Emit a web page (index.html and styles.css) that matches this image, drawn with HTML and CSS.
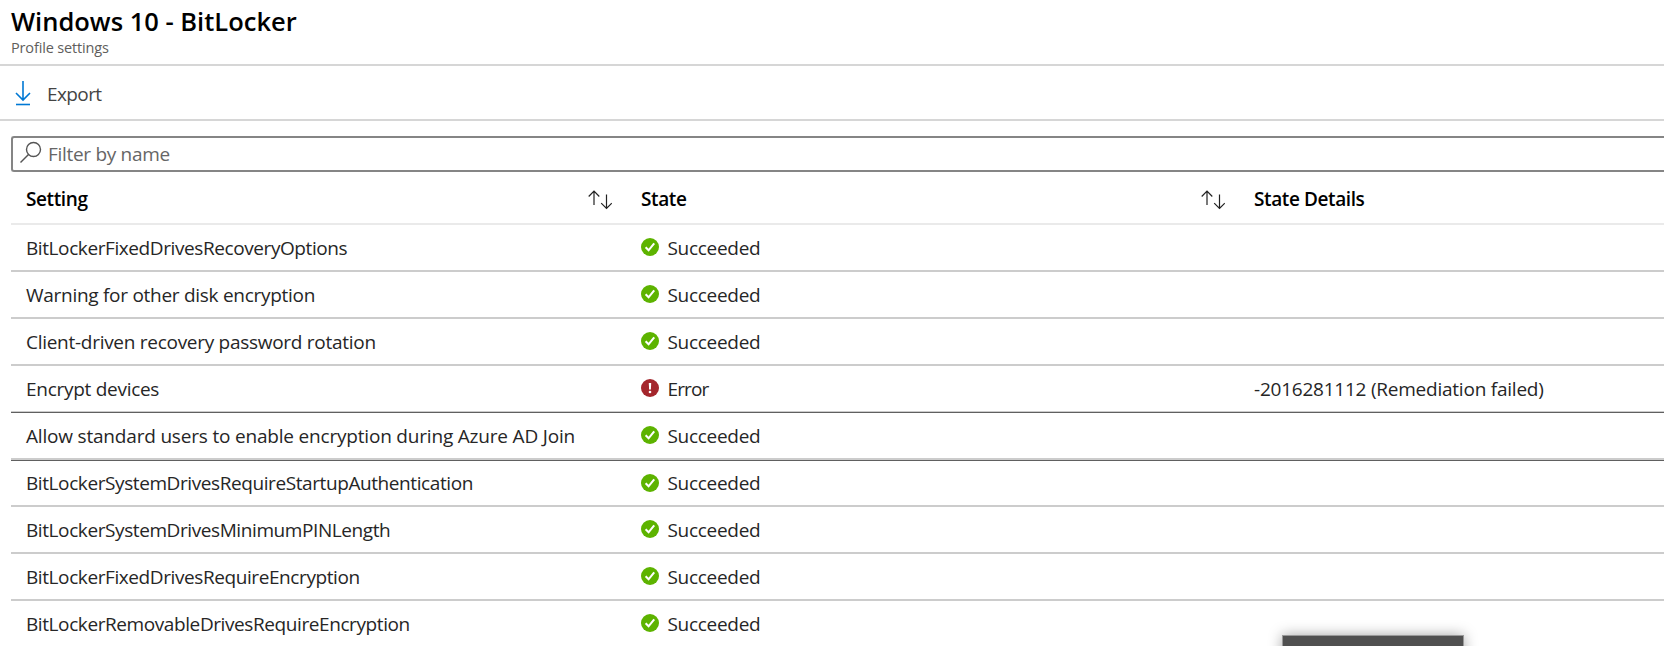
FILE: index.html
```html
<!DOCTYPE html>
<html lang="en">
<head>
  <meta charset="utf-8">
  <title>Windows 10 - BitLocker</title>
  <link rel="stylesheet" href="styles.css">
</head>
<body>
  <svg class="symbols" aria-hidden="true">
    <symbol id="ok" viewBox="0 0 18 18">
      <circle cx="9" cy="9" r="9" fill="#5db300"/>
      <path d="M4.600 9.300l3 3 5.600-6.900" fill="none" stroke="#fff" stroke-width="2.100"/>
    </symbol>
    <symbol id="error" viewBox="0 0 18 18">
      <circle cx="9" cy="9" r="9" fill="#a4262c"/>
      <path d="M7.800 4h2.400l-.3 6.600H8.100z" fill="#fff"/>
      <circle cx="9" cy="13" r="1.300" fill="#fff"/>
    </symbol>
    <symbol id="sort" viewBox="0 0 24 20">
      <path d="M6 15V1.500M.7 6.500L6 1.200l5.300 5.300M18.500 4.500v14M13.200 13.200l5.300 5.300 5.300-5.300" fill="none" stroke="#222" stroke-width="1.200"/>
    </symbol>
  </svg>

  <header class="header">
    <h1>Windows 10 - BitLocker</h1>
    <p>Profile settings</p>
  </header>

  <div class="toolbar">
    <button class="export">
      <svg width="16" height="25" viewBox="0 0 16 25" fill="none" stroke="#0078d4" stroke-width="1.600">
        <path d="M8 0v18.500M1 12l7 7 7-7"/>
        <path d="M1 23.500h14"/>
      </svg>
      <span>Export</span>
    </button>
  </div>

  <main class="content">
    <label class="filter">
      <svg width="22" height="22" viewBox="0 0 22 22" fill="none" stroke="#555" stroke-width="1.400">
        <circle cx="13.500" cy="8.500" r="7"/>
        <path d="M8.500 13.500l-8 8"/>
      </svg>
      <input type="text" placeholder="Filter by name">
    </label>

    <div class="grid">
      <div class="row head">
        <div>Setting <svg class="sort"><use href="#sort"/></svg></div>
        <div>State <svg class="sort"><use href="#sort"/></svg></div>
        <div>State Details</div>
      </div>
      <div class="row">
        <div class="name">BitLockerFixedDrivesRecoveryOptions</div>
        <div class="state"><svg class="icon"><use href="#ok"/></svg>Succeeded</div>
        <div></div>
      </div>
      <div class="row">
        <div class="phrase">Warning for other disk encryption</div>
        <div class="state"><svg class="icon"><use href="#ok"/></svg>Succeeded</div>
        <div></div>
      </div>
      <div class="row">
        <div class="phrase">Client-driven recovery password rotation</div>
        <div class="state"><svg class="icon"><use href="#ok"/></svg>Succeeded</div>
        <div></div>
      </div>
      <div class="row before-active">
        <div class="phrase">Encrypt devices</div>
        <div class="state failed"><svg class="icon"><use href="#error"/></svg>Error</div>
        <div class="details">-2016281112 (Remediation failed)</div>
      </div>
      <div class="row active">
        <div class="phrase long">Allow standard users to enable encryption during Azure AD Join</div>
        <div class="state"><svg class="icon"><use href="#ok"/></svg>Succeeded</div>
        <div></div>
      </div>
      <div class="row after-active">
        <div class="name">BitLockerSystemDrivesRequireStartupAuthentication</div>
        <div class="state"><svg class="icon"><use href="#ok"/></svg>Succeeded</div>
        <div></div>
      </div>
      <div class="row">
        <div class="name">BitLockerSystemDrivesMinimumPINLength</div>
        <div class="state"><svg class="icon"><use href="#ok"/></svg>Succeeded</div>
        <div></div>
      </div>
      <div class="row">
        <div class="name">BitLockerFixedDrivesRequireEncryption</div>
        <div class="state"><svg class="icon"><use href="#ok"/></svg>Succeeded</div>
        <div></div>
      </div>
      <div class="row">
        <div class="name">BitLockerRemovableDrivesRequireEncryption</div>
        <div class="state"><svg class="icon"><use href="#ok"/></svg>Succeeded</div>
        <div></div>
      </div>
    </div>
  </main>

  <div class="tooltip"></div>
</body>
</html>
```
FILE: styles.css
```css
* {
  box-sizing: border-box;
}
body {
  margin: 0;
  height: 646px;
  overflow: hidden;
  background: #fff;
  color: #262626;
  font-family: "Open Sans", "Noto Sans", sans-serif;
  font-size: 19px;
}
.symbols {
  position: absolute;
  width: 0;
  height: 0;
}
.header {
  height: 66px;
  padding: 4px 0 0 11px;
  border-bottom: 2px solid #d6d6d6;
}
.header h1 {
  margin: 0;
  color: #000;
  font-size: 25.5px;
  font-weight: 540;
  line-height: 34px;
}
.header p {
  margin: 0;
  color: #605e5c;
  font-size: 14.5px;
  letter-spacing: -0.15px;
  line-height: 19px;
}
.toolbar {
  display: flex;
  height: 55px;
  padding-left: 15px;
  border-bottom: 2px solid #d6d6d6;
}
.export {
  display: flex;
  align-items: center;
  gap: 16px;
  padding: 2px 0 0;
  border: 0;
  background: none;
  color: #444;
  font: inherit;
  letter-spacing: -0.6px;
}
.content {
  padding: 15px 0 0 11px;
}
.filter {
  display: flex;
  height: 36px;
  padding: 3px 0 0 7px;
  gap: 6px;
  border: 2px solid #858585;
  border-right: 0;
  border-radius: 3px 0 0 3px;
}
.filter input {
  flex: 1;
  height: 28px;
  margin-top: -1px;
  padding: 0;
  border: 0;
  outline: 0;
  background: none;
  font: inherit;
  letter-spacing: -0.3px;
}
.filter input::placeholder {
  color: #666;
}
.row {
  display: grid;
  grid-template-columns: 615px 613px 1fr;
  height: 47px;
  border-bottom: 2px solid #ccc;
}
.row > div {
  display: flex;
  align-items: center;
  padding-left: 15px;
  white-space: nowrap;
}
.row > .name {
  letter-spacing: -0.41px;
}
.row > .phrase {
  letter-spacing: -0.28px;
}
.row > .long {
  letter-spacing: -0.19px;
}
.row > .details {
  letter-spacing: -0.23px;
}
.row > .state {
  letter-spacing: -0.3px;
}
.row > .failed {
  letter-spacing: -0.9px;
}
.head {
  height: 53px;
  padding-top: 2px;
  border-bottom-color: #eaeaea;
  color: #000;
  font-weight: 560;
  letter-spacing: -0.4px;
}
.sort {
  width: 24px;
  height: 20px;
  margin: 2px 14px 0 auto;
}
.icon {
  width: 18px;
  height: 18px;
  margin: 0 8.5px 1px 0;
}
/* the focused row gets a dark outline inside the grid lines */
.before-active {
  height: 46px;
  border-bottom-width: 1px;
}
.active {
  height: 48px;
  border-top: 1px solid #606060;
}
.after-active {
  border-top: 1px solid #606060;
}
.tooltip {
  position: absolute;
  left: 1282px;
  top: 635px;
  width: 182px;
  height: 40px;
  border: 1px solid #999;
  background: #505050;
  box-shadow: 0 0 14px rgba(0, 0, 0, 0.35);
}
```
